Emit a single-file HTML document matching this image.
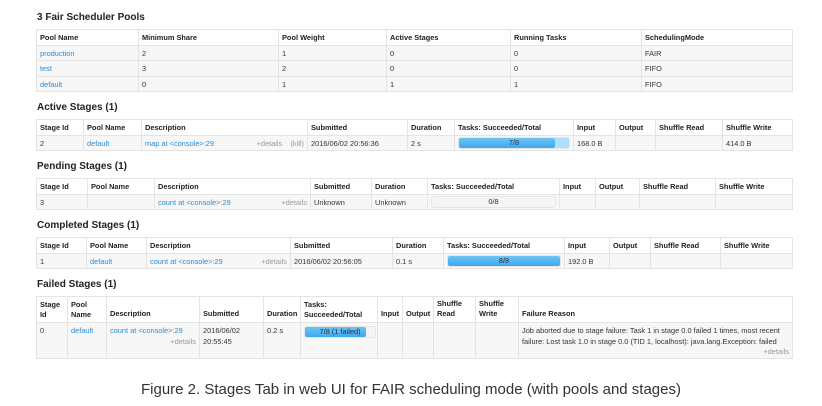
<!DOCTYPE html>
<html><head><meta charset="utf-8"><style>
body{margin:0;width:822px;height:406px;background:#fff;font-family:"Liberation Sans",sans-serif;color:#333;position:relative;overflow:hidden}
h4{position:absolute;left:37px;margin:0;font-size:10px;font-weight:bold;color:#222}
table{position:absolute;left:36px;border-collapse:collapse;table-layout:fixed;font-size:7.4px;border:1px solid #ddd}
td,th{border:1px solid #e4e4e4;padding:0 3px;text-align:left;vertical-align:middle;white-space:nowrap;overflow:hidden}
th{font-weight:bold;background:#fff;color:#222}
tbody td{background:#f7f7f7}
a{color:#2a8bd6;text-decoration:none}
.g{color:#999;float:right}
.bar{position:relative;height:10px;border-radius:3px;background:#f5f5f5;border:1px solid #e6e6e6;text-align:center;line-height:10px;color:#333}
.fill{position:absolute;left:0;top:0;bottom:0;background:linear-gradient(#6cc4f5,#3fa8ee);border-radius:2px}
.run{position:absolute;top:0;bottom:0;background:#aee0fb}
.bar span{position:relative}
.cap{position:absolute;top:381px;left:0;width:822px;text-align:center;font-size:15px;color:#333}
</style></head><body>
<h4 style="top:12px">3 Fair Scheduler Pools</h4>
<table style="top:29px;width:756px">
<colgroup><col style="width:102px"><col style="width:140px"><col style="width:108px"><col style="width:124px"><col style="width:131px"><col style="width:151px"></colgroup>
<thead><tr style="height:16px"><th>Pool Name</th><th>Minimum Share</th><th>Pool Weight</th><th>Active Stages</th><th>Running Tasks</th><th>SchedulingMode</th></tr></thead>
<tbody><tr style="height:15px"><td><a>production</a></td><td>2</td><td>1</td><td>0</td><td>0</td><td>FAIR</td></tr>
<tr style="height:16px"><td><a>test</a></td><td>3</td><td>2</td><td>0</td><td>0</td><td>FIFO</td></tr>
<tr style="height:15px"><td><a>default</a></td><td>0</td><td>1</td><td>1</td><td>1</td><td>FIFO</td></tr></tbody></table>

<h4 style="top:102px">Active Stages (1)</h4>
<table style="top:119px;width:756px">
<colgroup><col style="width:47px"><col style="width:58px"><col style="width:166px"><col style="width:100px"><col style="width:47px"><col style="width:119px"><col style="width:42px"><col style="width:40px"><col style="width:67px"><col style="width:70px"></colgroup>
<thead><tr style="height:16px"><th>Stage Id</th><th>Pool Name</th><th>Description</th><th>Submitted</th><th>Duration</th><th>Tasks: Succeeded/Total</th><th>Input</th><th>Output</th><th>Shuffle Read</th><th>Shuffle Write</th></tr></thead>
<tbody><tr style="height:15px"><td>2</td><td><a>default</a></td><td><a>map at &lt;console&gt;:29</a><span class="g">+details &nbsp;&nbsp;&nbsp;(kill)</span></td><td>2016/06/02 20:56:36</td><td>2 s</td><td><div class="bar"><div class="fill" style="width:87%"></div><div class="run" style="left:87%;width:13%"></div><span>7/8</span></div></td><td>168.0 B</td><td></td><td></td><td>414.0 B</td></tr></tbody></table>

<h4 style="top:161px">Pending Stages (1)</h4>
<table style="top:178px;width:756px">
<colgroup><col style="width:51px"><col style="width:67px"><col style="width:156px"><col style="width:61px"><col style="width:56px"><col style="width:132px"><col style="width:36px"><col style="width:44px"><col style="width:76px"><col style="width:77px"></colgroup>
<thead><tr style="height:16px"><th>Stage Id</th><th>Pool Name</th><th>Description</th><th>Submitted</th><th>Duration</th><th>Tasks: Succeeded/Total</th><th>Input</th><th>Output</th><th>Shuffle Read</th><th>Shuffle Write</th></tr></thead>
<tbody><tr style="height:15px"><td>3</td><td></td><td><a>count at &lt;console&gt;:29</a><span class="g">+details</span></td><td>Unknown</td><td>Unknown</td><td><div class="bar"><span>0/8</span></div></td><td></td><td></td><td></td><td></td></tr></tbody></table>

<h4 style="top:220px">Completed Stages (1)</h4>
<table style="top:237px;width:756px">
<colgroup><col style="width:50px"><col style="width:60px"><col style="width:144px"><col style="width:102px"><col style="width:51px"><col style="width:121px"><col style="width:45px"><col style="width:41px"><col style="width:70px"><col style="width:72px"></colgroup>
<thead><tr style="height:16px"><th>Stage Id</th><th>Pool Name</th><th>Description</th><th>Submitted</th><th>Duration</th><th>Tasks: Succeeded/Total</th><th>Input</th><th>Output</th><th>Shuffle Read</th><th>Shuffle Write</th></tr></thead>
<tbody><tr style="height:15px"><td>1</td><td><a>default</a></td><td><a>count at &lt;console&gt;:29</a><span class="g">+details</span></td><td>2016/06/02 20:56:05</td><td>0.1 s</td><td><div class="bar"><div class="fill" style="width:100%"></div><span>8/8</span></div></td><td>192.0 B</td><td></td><td></td><td></td></tr></tbody></table>

<h4 style="top:279px">Failed Stages (1)</h4>
<table style="top:296px;width:756px">
<colgroup><col style="width:31px"><col style="width:39px"><col style="width:93px"><col style="width:64px"><col style="width:37px"><col style="width:77px"><col style="width:25px"><col style="width:31px"><col style="width:42px"><col style="width:43px"><col style="width:274px"></colgroup>
<thead><tr style="height:26px;line-height:10px"><th>Stage<br>Id</th><th>Pool<br>Name</th><th style="vertical-align:bottom;padding-bottom:3px">Description</th><th style="vertical-align:bottom;padding-bottom:3px">Submitted</th><th style="vertical-align:bottom;padding-bottom:3px">Duration</th><th>Tasks:<br>Succeeded/Total</th><th style="vertical-align:bottom;padding-bottom:3px">Input</th><th style="vertical-align:bottom;padding-bottom:3px">Output</th><th style="vertical-align:top;padding-top:2px">Shuffle<br>Read</th><th style="vertical-align:top;padding-top:2px">Shuffle<br>Write</th><th style="vertical-align:bottom;padding-bottom:3px">Failure Reason</th></tr></thead>
<tbody><tr style="height:36px;line-height:10.5px"><td style="vertical-align:top;padding-top:3px">0</td><td style="vertical-align:top;padding-top:3px"><a>default</a></td><td style="vertical-align:top;padding-top:3px"><a>count at &lt;console&gt;:29</a><br><span class="g">+details</span></td><td style="vertical-align:top;padding-top:3px">2016/06/02<br>20:55:45</td><td style="vertical-align:top;padding-top:3px">0.2 s</td><td style="vertical-align:top;padding-top:3px"><div class="bar" style="width:70px"><div class="fill" style="width:87%"></div><span>7/8 (1 failed)</span></div></td><td></td><td></td><td></td><td></td><td style="vertical-align:top;padding-top:3px;white-space:normal">Job aborted due to stage failure: Task 1 in stage 0.0 failed 1 times, most recent failure: Lost task 1.0 in stage 0.0 (TID 1, localhost): java.lang.Exception: failed<br><span class="g">+details</span></td></tr></tbody></table>

<div class="cap">Figure 2. Stages Tab in web UI for FAIR scheduling mode (with pools and stages)</div>
</body></html>
